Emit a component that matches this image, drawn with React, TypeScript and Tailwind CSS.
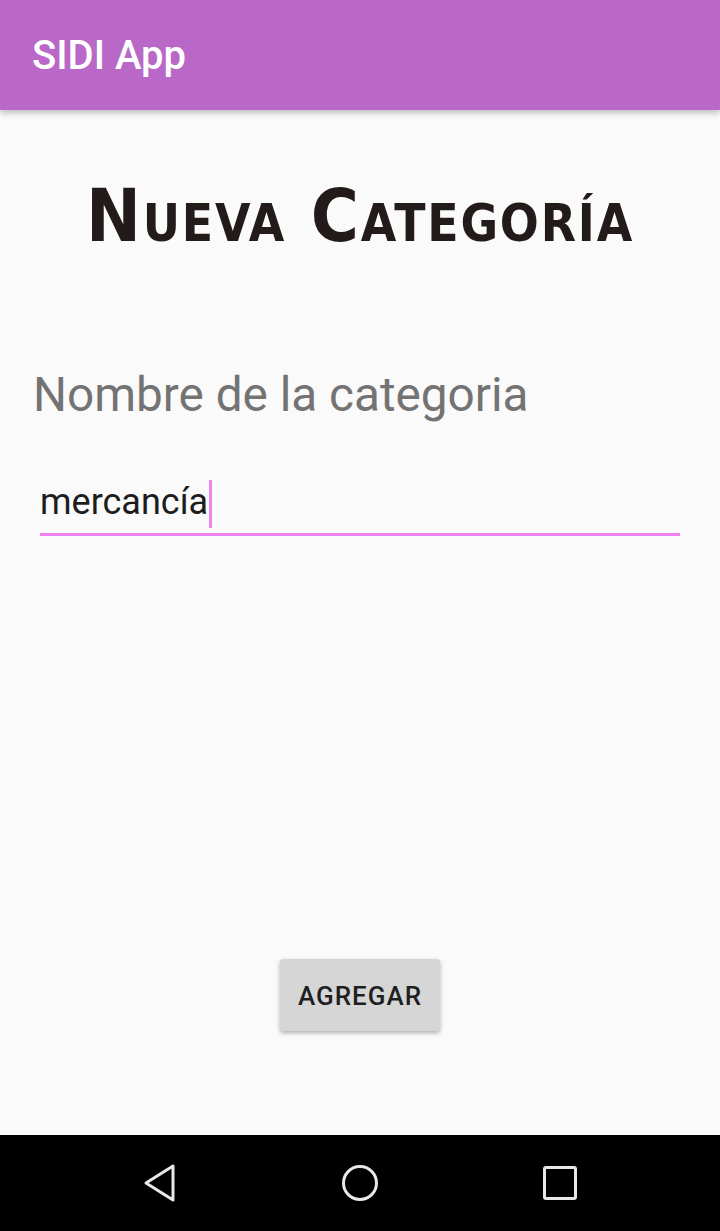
import React from "react";

export default function App() {
  return (
    <div className="w-[720px] h-[1231px] flex flex-col bg-[#fafafa] overflow-hidden" style={{ fontFamily: "Roboto, 'Noto Sans', sans-serif" }}>
      <div className="h-[110px] shrink-0 bg-[#ba68c8] flex items-center pl-[32px] shadow-[0_3px_6px_rgba(0,0,0,0.25)] relative z-10">
        <span className="text-white text-[40px] font-medium leading-none mt-[2px]">SIDI App</span>
      </div>
      <div className="flex-1 flex flex-col">
        <div className="flex justify-center pt-[69px]">
          <h1
            className="text-[#231a1a] text-[73px] font-bold leading-none tracking-[1.8px]"
            style={{ fontFamily: "'DejaVu Sans Condensed', 'DejaVu Sans', sans-serif", fontVariant: "small-caps", fontStretch: "condensed" }}
          >
            Nueva Categoría
          </h1>
        </div>
        <div className="pl-[33px] pt-[120px] text-[#737373] text-[47.7px] leading-none">Nombre de la categoria</div>
        <div className="mx-[40px] mt-[60px] flex flex-col">
          <div className="flex items-end h-[48px]">
            <span className="text-[#1d1d1d] text-[36px] leading-none pb-[8px]">mercancía</span>
            <span className="w-[3px] h-[48px] bg-[#ee82ee] ml-[1px]" />
          </div>
          <div className="h-[3px] bg-[#ee82ee] mt-[5px]" />
        </div>
        <div className="flex-1" />
        <div className="flex justify-center mb-[104px]">
          <div className="w-[160px] h-[72px] bg-[#d6d6d6] rounded-[3px] shadow-[0_2px_4px_rgba(0,0,0,0.3)] flex items-center justify-center">
            <span className="text-[#1f1f1f] text-[26px] font-medium tracking-[1px] mt-[2px]">AGREGAR</span>
          </div>
        </div>
      </div>
      <div className="h-[96px] shrink-0 bg-black flex items-center justify-between px-[140px]">
        <svg width="40" height="40" viewBox="0 0 40 40" className="ml-[-1px]">
          <path d="M34 3 L34 37 L7 20 Z" fill="none" stroke="#e8e8e8" strokeWidth="3" strokeLinejoin="round" />
        </svg>
        <svg width="40" height="40" viewBox="0 0 40 40">
          <circle cx="20" cy="20" r="16.5" fill="none" stroke="#e8e8e8" strokeWidth="3" />
        </svg>
        <svg width="40" height="40" viewBox="0 0 40 40">
          <rect x="4.5" y="4.5" width="31" height="31" rx="1.5" fill="none" stroke="#e8e8e8" strokeWidth="3" />
        </svg>
      </div>
    </div>
  );
}
